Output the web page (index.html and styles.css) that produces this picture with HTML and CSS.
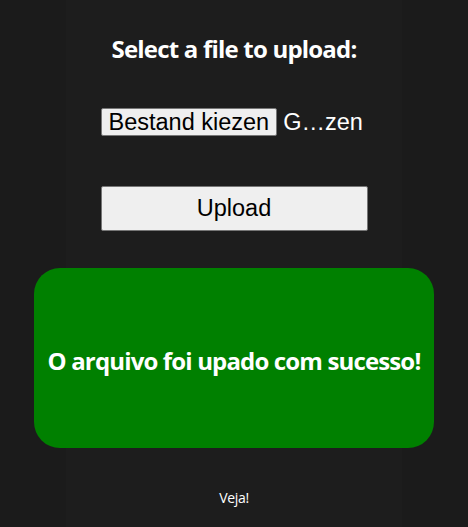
FILE: index.html
```html
<!DOCTYPE html>
<html>
<head>
<meta charset="utf-8">
<link rel="stylesheet" href="styles.css">
</head>
<body>
<main class="column">
  <h1 class="title">Select a file to upload:</h1>
  <div class="file-row">
    <button class="file-btn" type="button">Bestand kiezen</button>
    <span class="file-name">G…zen</span>
  </div>
  <button class="upload-btn" type="button">Upload</button>
  <div class="success"><span class="success-text">O arquivo foi upado com sucesso!</span></div>
  <p class="link">Veja!</p>
</main>
</body>
</html>
```
FILE: styles.css
```css
html, body {
  margin: 0;
  padding: 0;
  background: #1b1b1b;
}
.column {
  width: 336px;
  margin: 0 auto;
  min-height: 527px;
  background: #1d1d1d;
  display: flex;
  flex-direction: column;
  align-items: center;
  color: #fff;
  font-family: "Open Sans", sans-serif;
}
.title {
  margin: 33px 0 0;
  font-size: 24px;
  font-weight: 700;
  letter-spacing: -0.8px;
  line-height: 32px;
}
.file-row {
  margin-top: 43px;
  display: flex;
  align-items: center;
  gap: 6px;
  width: 267px;
  height: 28px;
  font-family: "Liberation Sans", Arial, sans-serif;
  font-size: 23.5px;
}
.file-btn {
  font: inherit;
  height: 28px;
  padding: 0 7px;
  background: #efefef;
  color: #000;
  border: 1px solid #767676;
  border-radius: 2px;
  line-height: 26px;
  flex: none;
}
.file-name {
  color: #fff;
  white-space: nowrap;
}
.upload-btn {
  margin-top: 50px;
  width: 267px;
  height: 45px;
  flex: none;
  font-family: "Liberation Sans", Arial, sans-serif;
  font-size: 23.5px;
  background: #efefef;
  color: #000;
  border: 1px solid #767676;
  border-radius: 2px;
}
.success {
  margin-top: 37px;
  flex: none;
  width: 400px;
  height: 180px;
  background: #008000;
  border-radius: 26px;
  display: flex;
  align-items: center;
  justify-content: center;
}
.success-text {
  white-space: nowrap;
  font-size: 24px;
  font-weight: 700;
  letter-spacing: -0.85px;
  padding-top: 5px;
}
.link {
  margin: 40px 0 0;
  font-size: 14px;
  letter-spacing: -0.3px;
}
```
